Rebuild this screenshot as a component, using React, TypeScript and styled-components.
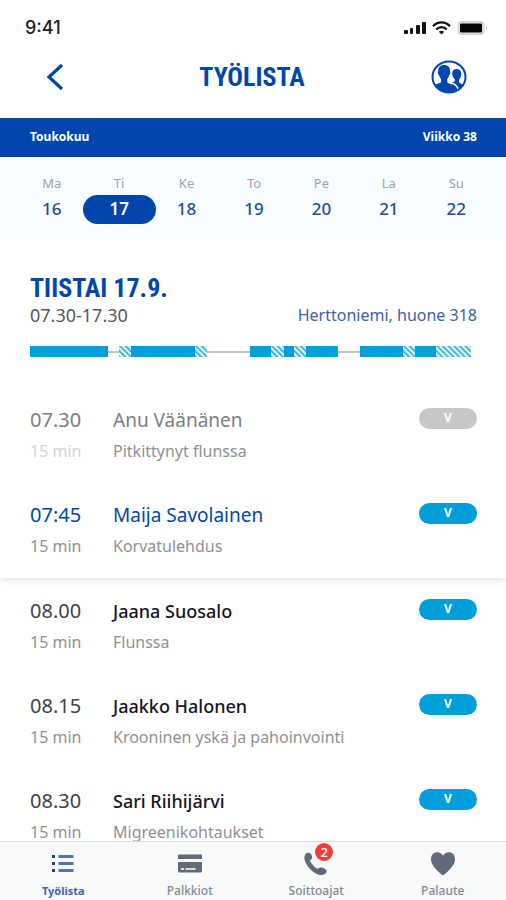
import React from "react";
import styled, { createGlobalStyle, css } from "styled-components";

const color = {
  blue: "#0046ad",
  link: "#1f4e9e",
  cyan: "#009fda",
  tint: "#f8fdff",
  muted: "#8f9194",
  dark: "#14161f",
  bar: "#f8f9f9",
  tab: "#626977",
};

const GlobalStyle = createGlobalStyle`
  *, *::before, *::after { box-sizing: border-box; }
  body {
    margin: 0;
    background: #fff;
    color: ${color.dark};
    font-family: "Noto Sans", "Open Sans", sans-serif;
  }
  button { font: inherit; color: inherit; background: none; border: 0; padding: 0; cursor: pointer; }
  h1, h2, h3, p, ul { margin: 0; padding: 0; }
  ul { list-style: none; }
`;

const Screen = styled.div`
  display: flex;
  flex-direction: column;
  height: 100vh;
  background: #fff;
`;

const StatusBar = styled.div`
  display: flex;
  justify-content: space-between;
  align-items: center;
  padding: 16px 18px 0 25px;
`;

const Clock = styled.time`
  font: 500 18px/24px Inter, sans-serif;
  color: #222;
`;

const StatusIcons = styled.div`
  display: flex;
  align-items: center;
  gap: 6px;
`;

const Header = styled.header`
  display: grid;
  grid-template-columns: 48px 1fr 48px;
  align-items: center;
  height: 78px;
  padding: 0 33px 4px 31px;
`;

const IconButton = styled.button`
  display: flex;
  align-items: center;
  justify-content: center;
  height: 48px;
`;

const condensed = css`
  font-family: "Liberation Sans Narrow", "Roboto Condensed", "Open Sans Condensed", Roboto, sans-serif;
  font-weight: 700;
  font-size: 26px;
  line-height: 30px;
  color: ${color.blue};
`;

const Title = styled.h1`
  ${condensed}
  text-align: center;
`;

const MonthBar = styled.div`
  display: flex;
  justify-content: space-between;
  align-items: center;
  height: 39px;
  padding: 0 29px 2px 30px;
  background: ${color.blue};
  color: #fff;
  font-size: 12px;
  font-weight: 700;
`;

const Week = styled.div`
  display: grid;
  grid-template-columns: repeat(7, minmax(0, 1fr));
  justify-items: center;
  padding: 16px 16px 15px 18px;
  background: ${color.tint};
`;

const Day = styled.button`
  display: flex;
  flex-direction: column;
  align-items: center;
  gap: 2px;
  font-size: 13px;
  line-height: 20px;
  color: #a0a2a4;
`;

const DayNumber = styled.span<{ $selected: boolean }>`
  width: 73px;
  border-radius: 15px;
  font-size: 17px;
  line-height: 28px;
  padding-bottom: 1px;
  font-weight: ${(p) => (p.$selected ? 600 : 500)};
  color: ${(p) => (p.$selected ? "#fff" : color.link)};
  background: ${(p) => (p.$selected ? color.blue : "transparent")};
`;

const Scroller = styled.main`
  flex: 1;
  min-height: 0;
  overflow-y: auto;
  scrollbar-width: none;
`;

const CurrentPanel = styled.section`
  box-shadow: 0 2px 7px rgba(0, 0, 0, 0.12);
`;

const DaySummary = styled.div`
  padding: 34px 29px 51px 30px;
`;

const DayTitle = styled.h2`
  ${condensed}
`;

const SummaryLine = styled.div`
  display: flex;
  justify-content: space-between;
  font-size: 16px;
  line-height: 24px;
  color: #55585c;
`;

const Hours = styled.span`
  font-size: 18px;
`;

const Place = styled.span`
  color: #3c62a8;
`;

const Timeline = styled.div`
  display: flex;
  height: 11px;
  margin: 19px 6px 0 0;
`;

type Kind = "booked" | "hatched" | "free";

const kindBackground: Record<Kind, string> = {
  booked: color.cyan,
  hatched: `repeating-linear-gradient(45deg, #45b8e2 0 1px, #e4f5fb 2px 3px, #45b8e2 4px)`,
  free: "linear-gradient(#b9c7cf, #b9c7cf) center / 100% 2px no-repeat",
};

const Segment = styled.span<{ $kind: Kind; $minutes: number }>`
  flex: ${(p) => p.$minutes} 1 0;
  background: ${(p) => kindBackground[p.$kind]};
`;

const Row = styled.li`
  display: grid;
  grid-template-columns: 83px 1fr 58px;
  row-gap: 7px;
  padding: 0 29px 40px 30px;
  &:last-child { padding-bottom: 20px; }
`;

type Tone = "past" | "current" | "upcoming";

const timeColor: Record<Tone, string> = { past: "#7c7e81", current: color.blue, upcoming: "#3f424d" };
const nameColor: Record<Tone, string> = { past: "#7c7e81", current: color.blue, upcoming: color.dark };

const Time = styled.time<{ $tone: Tone }>`
  font-size: 20px;
  line-height: 24px;
  color: ${(p) => timeColor[p.$tone]};
`;

const Name = styled.h3<{ $tone: Tone }>`
  font-size: ${(p) => (p.$tone === "upcoming" ? 18 : 19)}px;
  line-height: 24px;
  font-weight: ${(p) => (p.$tone === "upcoming" ? 500 : 400)};
  color: ${(p) => nameColor[p.$tone]};
`;

const Badge = styled.span<{ $tone: Tone }>`
  height: 21px;
  border-radius: 11px;
  background: ${(p) => (p.$tone === "past" ? "#c6c7c6" : color.cyan)};
  color: #fff;
  text-align: center;
  font-size: 12px;
  line-height: 20px;
  font-weight: 700;
`;

const Detail = styled.p<{ $faded?: boolean }>`
  font-size: 16px;
  line-height: 24px;
  color: ${(p) => (p.$faded ? "#d2d3d4" : color.muted)};
`;

const Upcoming = styled.section`
  padding-top: 21px;
`;

const TabBar = styled.nav`
  display: grid;
  grid-template-columns: repeat(4, 1fr);
  height: 59px;
  border-top: 1px solid #d9dbdc;
  background: ${color.bar};
`;

const Tab = styled.a<{ $active: boolean }>`
  display: flex;
  flex-direction: column;
  align-items: center;
  padding-top: 8px;
  gap: 4px;
  text-decoration: none;
  font-size: ${(p) => (p.$active ? 11 : 12)}px;
  line-height: 18px;
  font-weight: ${(p) => (p.$active ? 700 : 500)};
  color: ${(p) => (p.$active ? "#3d66ad" : "#85888f")};
`;

const TabIcon = styled.span`
  position: relative;
  display: flex;
  width: 28px;
  height: 28px;
`;

const Count = styled.span`
  position: absolute;
  top: -7px;
  right: -3px;
  width: 18px;
  height: 18px;
  border-radius: 50%;
  background: #ee3e3c;
  color: #fff;
  text-align: center;
  font-size: 13px;
  line-height: 18px;
`;

const SignalIcon = () => (
  <svg width="22" height="14" viewBox="0 0 22 14" fill="#111" aria-hidden="true">
    <rect x="0" y="9" width="4" height="4" rx="1" />
    <rect x="6" y="7" width="3" height="6" rx="1" />
    <rect x="12" y="4" width="4" height="9" rx="1" />
    <rect x="18" y="1" width="4" height="12" rx="1" />
  </svg>
);

const WifiIcon = () => (
  <svg width="19" height="14" viewBox="0 0 19 14" fill="none" stroke="#111" strokeWidth="2.2" aria-hidden="true">
    <path d="M1 5.2C6 0.1 13 0.1 18 5.2" />
    <path d="M4.2 8.5C7.3 5.3 11.7 5.3 14.8 8.5" />
    <path d="M9.5 13.5L6.8 10.7C8.3 9.3 10.7 9.3 12.2 10.7Z" fill="#111" stroke="none" />
  </svg>
);

const BatteryIcon = () => (
  <svg width="31" height="14" viewBox="0 0 31 14" aria-hidden="true">
    <rect x="1" y="0.5" width="26" height="13" rx="3" fill="#e0e0e0" stroke="#cfcfcf" />
    <rect x="3" y="2.5" width="22" height="9" rx="1" fill="#050505" />
    <path d="M29 5q2 2 0 4z" fill="#aaa" />
  </svg>
);

const BackIcon = () => (
  <svg width="18" height="28" viewBox="0 0 18 28" fill="none" stroke={color.blue} strokeWidth="3.2" aria-hidden="true">
    <path d="M16 2L3 14L16 26" />
  </svg>
);

const PeopleIcon = () => (
  <svg width="36" height="34" viewBox="0 0 36 34" aria-hidden="true">
    <defs>
      <clipPath id="disc"><ellipse cx="18" cy="17" rx="16.5" ry="15.5" /></clipPath>
    </defs>
    <g clipPath="url(#disc)" fill={color.blue}>
      <path d="M25.5 9c3.5 0 5 2.3 4.7 5.5-.3 2.6-1.2 4.2-2.2 5.2v2.5c0 1 5 2.3 7 4V34H20l1-11.5 2.8-1.3v-2c-1.6-1.2-2.6-3.2-2.6-5.6C21.2 10.8 22.8 9 25.5 9z" />
      <path d="M13.2 5c4 0 6.3 2.6 5.8 6.7.7.3.6 2.6-.7 3.4-.4 1.9-1.2 3-2 3.8v3.2c0 1.9 9.7 2.6 10.7 8.4V34H0v-7.500c2-2.300 10-2.700 10-4.400v-3.200c-.9-.8-1.600-2-2-3.800-1.300-.8-1.500-3.100-.7-3.400C6.800 7.600 9.200 5 13.200 5z" />
      <path d="M19.5 22.3c4 1.6 7.5 3.3 8 8.2" fill="none" stroke="#fff" strokeWidth="1.5" />
    </g>
    <ellipse cx="18" cy="17" rx="16.5" ry="15.5" fill="none" stroke={color.blue} strokeWidth="2" />
  </svg>
);

const ListIcon = () => (
  <svg width="28" height="28" viewBox="0 0 28 28" aria-hidden="true">
    <path d="M3 6.5h3M3 13.5h3M3 20.5h3" stroke="#263d70" strokeWidth="3" />
    <path d="M9.5 6.5h15M9.5 13.5h15M9.5 20.5h15" stroke="#4f77b5" strokeWidth="3" />
  </svg>
);

const CardIcon = () => (
  <svg width="28" height="28" viewBox="0 0 28 28" aria-hidden="true">
    <path d="M3 4.5h22q1 0 1 1V9H2V5.5q0-1 1-1zM2 12h24v9.5q0 1-1 1H3q-1 0-1-1z" fill={color.tab} />
    <path d="M5 19h3M9.5 19h10" stroke="#fff" strokeWidth="1.6" />
  </svg>
);

const PhoneIcon = () => (
  <svg width="28" height="28" viewBox="0 0 28 28" fill={color.tab} aria-hidden="true">
    <path d="M3.4 4.2C4.8 2.2 8 2.3 9.3 4.6c1.500 2.700.8 4.500-1.200 6 .8 3 4.500 7 7.800 8.300 1.600-1.800 4-2 6.600-.4 2.600 1.600 2.700 3.900.7 5.300-3.300 2.300-8.200 1.500-13-2.700C4.600 16.200.4 8.500 3.400 4.200z" />
  </svg>
);

const HeartIcon = () => (
  <svg width="28" height="28" viewBox="0 0 28 28" fill={color.tab} aria-hidden="true">
    <path d="M14 25.5C9 21.5 2 15.5 2 9.2 2 5 4.8 2.3 8.2 2.3c2.5 0 4.6 1.2 5.8 3.5 1.2-2.300 3.300-3.500 5.800-3.500C23.200 2.300 26 5 26 9.200c0 6.300-7 12.300-12 16.300z" />
  </svg>
);

const days: [string, number][] = [
  ["Ma", 16], ["Ti", 17], ["Ke", 18], ["To", 19], ["Pe", 20], ["La", 21], ["Su", 22],
];

const schedule: [Kind, number][] = [
  ["booked", 78], ["free", 11], ["hatched", 12], ["booked", 64], ["hatched", 12], ["free", 43],
  ["booked", 21], ["hatched", 13], ["booked", 10], ["hatched", 12], ["booked", 32], ["free", 22],
  ["booked", 43], ["hatched", 12], ["booked", 21], ["hatched", 35],
];

interface Visit {
  time: string;
  name: string;
  reason: string;
  tone: Tone;
}

const currentVisits: Visit[] = [
  { time: "07.30", name: "Anu Väänänen", reason: "Pitkittynyt flunssa", tone: "past" },
  { time: "07:45", name: "Maija Savolainen", reason: "Korvatulehdus", tone: "current" },
];

const upcomingVisits: Visit[] = [
  { time: "08.00", name: "Jaana Suosalo", reason: "Flunssa", tone: "upcoming" },
  { time: "08.15", name: "Jaakko Halonen", reason: "Krooninen yskä ja pahoinvointi", tone: "upcoming" },
  { time: "08.30", name: "Sari Riihijärvi", reason: "Migreenikohtaukset", tone: "upcoming" },
];

const tabs = [
  { label: "Työlista", icon: <ListIcon />, active: true },
  { label: "Palkkiot", icon: <CardIcon />, active: false },
  { label: "Soittoajat", icon: <PhoneIcon />, active: false, count: 2 },
  { label: "Palaute", icon: <HeartIcon />, active: false },
];

const VisitRow = ({ time, name, reason, tone }: Visit) => (
  <Row>
    <Time $tone={tone}>{time}</Time>
    <Name $tone={tone}>{name}</Name>
    <Badge $tone={tone}>V</Badge>
    <Detail $faded={tone === "past"}>15 min</Detail>
    <Detail>{reason}</Detail>
  </Row>
);

export default function App() {
  const [selected, setSelected] = React.useState(17);
  return (
    <Screen>
      <GlobalStyle />
      <StatusBar>
        <Clock>9:41</Clock>
        <StatusIcons>
          <SignalIcon />
          <WifiIcon />
          <BatteryIcon />
        </StatusIcons>
      </StatusBar>
      <Header>
        <IconButton type="button" aria-label="Takaisin"><BackIcon /></IconButton>
        <Title>TYÖLISTA</Title>
        <IconButton type="button" aria-label="Profiili"><PeopleIcon /></IconButton>
      </Header>
      <MonthBar>
        <span>Toukokuu</span>
        <span>Viikko 38</span>
      </MonthBar>
      <Week>
        {days.map(([label, number]) => (
          <Day key={number} type="button" aria-pressed={number === selected} onClick={() => setSelected(number)}>
            {label}
            <DayNumber $selected={number === selected}>{number}</DayNumber>
          </Day>
        ))}
      </Week>
      <Scroller>
        <CurrentPanel>
          <DaySummary>
            <DayTitle>TIISTAI 17.9.</DayTitle>
            <SummaryLine>
              <Hours>07.30-17.30</Hours>
              <Place>Herttoniemi, huone 318</Place>
            </SummaryLine>
            <Timeline>
              {schedule.map(([kind, minutes], i) => (
                <Segment key={i} $kind={kind} $minutes={minutes} />
              ))}
            </Timeline>
          </DaySummary>
          <ul>{currentVisits.map((v) => <VisitRow key={v.time} {...v} />)}</ul>
        </CurrentPanel>
        <Upcoming>
          <ul>{upcomingVisits.map((v) => <VisitRow key={v.time} {...v} />)}</ul>
        </Upcoming>
      </Scroller>
      <TabBar>
        {tabs.map((t) => (
          <Tab key={t.label} href="#" $active={t.active}>
            <TabIcon>
              {t.icon}
              {t.count && <Count>{t.count}</Count>}
            </TabIcon>
            {t.label}
          </Tab>
        ))}
      </TabBar>
    </Screen>
  );
}
